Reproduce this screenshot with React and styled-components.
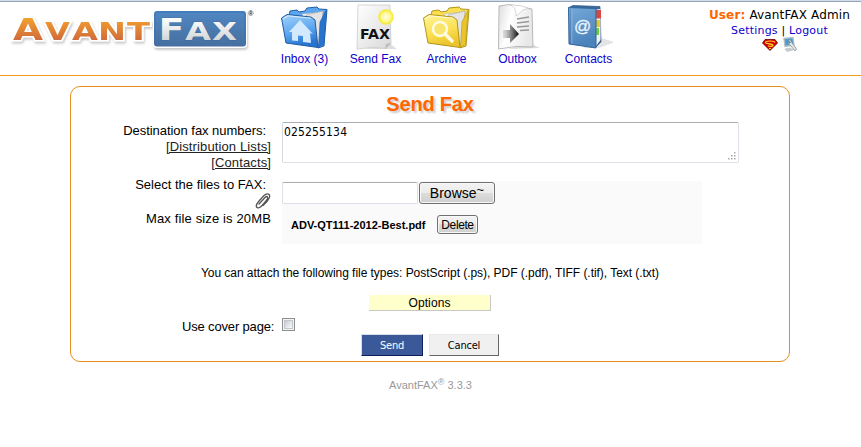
import React from 'react'
import styled, { createGlobalStyle } from 'styled-components'

const GlobalStyle = createGlobalStyle`
  * {
    box-sizing: border-box;
  }
  body {
    margin: 0;
    background: #fff;
    color: #000;
    font-family: 'Liberation Sans', Arial, sans-serif;
    font-size: 13px;
  }
  svg {
    display: block;
  }
`

const Page = styled.div`
  width: 861px;
  height: 447px;
  overflow: hidden;
`

const Header = styled.header`
  display: grid;
  grid-template-columns: 269px 355px 1fr;
  height: 76px;
  background: linear-gradient(#cfdcec 1px, #98a5b5 1px, #98a5b5 2px, #fff 2px);
  border-bottom: 1px solid #f29a1f;
  padding-top: 2px;
`

const Menu = styled.nav`
  display: grid;
  grid-template-columns: repeat(5, 71px);
`

const MenuItem = styled.a`
  display: flex;
  flex-direction: column;
  align-items: center;
  color: #0d00cc;
  font-size: 12px;
  line-height: 14px;
  white-space: nowrap;
  svg {
    margin-bottom: 1px;
  }
`

const User = styled.div`
  display: flex;
  flex-direction: column;
  align-items: center;
  padding: 6px 0 0 74px;
  font-family: 'DejaVu Sans', Verdana, sans-serif;
  font-size: 12px;
  line-height: 15px;
  white-space: nowrap;
  p {
    margin: 0;
    letter-spacing: 0.15px;
  }
  p + p {
    font-size: 11px;
    letter-spacing: 0.2px;
  }
  b {
    color: #ff6600;
  }
  a {
    color: #0d00cc;
  }
`

const UserIcons = styled.div`
  display: flex;
  align-items: center;
  gap: 5px;
  height: 13px;
`

const Panel = styled.main`
  width: 720px;
  height: 276px;
  margin: 10px 0 0 70px;
  border: 1px solid #e3901c;
  border-radius: 10px;
`

const Title = styled.h1`
  margin: 6px 0 6px;
  color: #ff6600;
  font-size: 20px;
  line-height: 23px;
  text-align: center;
  letter-spacing: -0.2px;
  text-shadow: 2px 2px 2px #ccc;
`

const FormRow = styled.div`
  display: grid;
  grid-template-columns: 200px 1fr;
  column-gap: 11px;
  height: ${({ $height }) => $height};
`

const Label = styled.div`
  margin-top: ${({ $top }) => $top || 0};
  line-height: 16px;
  text-align: right;
  white-space: nowrap;
`

const LabelLine = styled.div`
  padding-right: ${({ $inset }) => ($inset ? '5px' : 0)};
  letter-spacing: ${({ $spacing }) => $spacing || 0};
`

const ListLink = styled.a`
  display: block;
  color: #222;
  text-decoration: underline;
  letter-spacing: 0.12px;
`

const Clip = styled.div`
  display: flex;
  justify-content: flex-end;
  height: 18px;
`

const Numbers = styled.div`
  display: flex;
  justify-content: space-between;
  width: 457px;
  height: 41px;
  padding: 2px 2px 1px 1px;
  border: 1px solid #dbdfe6;
  border-top-color: #abadb3;
  border-left-color: #d5d8de;
  border-radius: 2px;
  font-family: 'DejaVu Sans Condensed', 'DejaVu Sans', Tahoma, sans-serif;
  font-stretch: condensed;
  font-size: 12px;
  line-height: 14px;
  letter-spacing: 0.15px;
  svg {
    align-self: flex-end;
  }
`

const Files = styled.div`
  width: 420px;
  height: 63px;
  background: #fafafa;
`

const FilePicker = styled.div`
  display: flex;
  gap: 1px;
  padding-top: 1px;
`

const PathField = styled.div`
  width: 136px;
  height: 22px;
  border: 1px solid #dbdfe6;
  border-top-color: #abadb3;
  border-radius: 2px;
  background: #fff;
`

const NativeButton = styled.button`
  width: ${({ $width }) => $width};
  height: ${({ $height }) => $height};
  padding: 0;
  border: 1px solid #707070;
  border-radius: 3px;
  background: linear-gradient(#f3f3f3, #ebebeb 50%, #dddddd 50%, #cfcfcf);
  box-shadow: inset 0 0 0 1px #f8f8f8;
  color: #000;
  font-family: inherit;
  font-size: ${({ $size }) => $size};
  letter-spacing: ${({ $spacing }) => $spacing || 0};
  line-height: 1;
  white-space: nowrap;
  sup {
    font-size: 13px;
    line-height: 0;
    vertical-align: 4px;
  }
`

const Attached = styled.div`
  display: flex;
  align-items: center;
  gap: 10px;
  padding: 11px 0 0 9px;
  b {
    width: 136px;
    font-size: 11px;
    white-space: nowrap;
  }
`

const Note = styled.p`
  margin: 21px 0 14px;
  font-size: 12px;
  line-height: 16px;
  text-align: center;
  white-space: nowrap;
  letter-spacing: -0.04px;
`

const Options = styled.div`
  width: 122px;
  height: 16px;
  margin: 0 auto;
  border: solid #c8c8c8;
  border-width: 0 1px 1px 0;
  background: #ffffcc;
  font-size: 12px;
  line-height: 16px;
  text-align: center;
  letter-spacing: 0.1px;
`

const CoverRow = styled.div`
  display: flex;
  gap: 8px;
  height: 23px;
  padding: 7px 0 0 111px;
  line-height: 17px;
  white-space: nowrap;
  span:first-child {
    width: 92px;
    letter-spacing: -0.16px;
  }
`

const Checkbox = styled.span`
  width: 13px;
  height: 13px;
  border: 1px solid #8e8f8f;
  background: linear-gradient(135deg, #b8bec8, #f6f6f6 75%);
  box-shadow: inset 0 0 0 1px #f4f4f4, inset 0 0 0 2px #c3c6cc;
`

const Actions = styled.div`
  display: flex;
  gap: 6px;
  padding-left: 290px;
`

const ActionButton = styled.button`
  width: ${({ $width }) => $width};
  height: 22px;
  padding: 1px 0 0;
  border: 1px solid;
  border-color: ${({ $primary }) =>
    $primary ? '#d9dfea #0e1f5b #0e1f5b #d9dfea' : '#e7e7e7 #666 #666 #e7e7e7'};
  background: ${({ $primary }) => ($primary ? '#3b5998' : '#f0f0f0')};
  color: ${({ $primary }) => ($primary ? '#fff' : '#000')};
  font-family: 'DejaVu Sans Condensed', 'DejaVu Sans', Tahoma, sans-serif;
  font-stretch: condensed;
  font-size: 11px;
  letter-spacing: -0.2px;
`

const Footer = styled.footer`
  margin-top: 15px;
  color: #999;
  font-size: 11px;
  line-height: 16px;
  text-align: center;
  sup {
    font-size: 9px;
    line-height: 0;
    vertical-align: 4px;
  }
`

const LogoWord = styled.g`
  font-family: 'DejaVu Sans', Verdana, sans-serif;
  font-weight: bold;
  font-size: 25px;
  paint-order: stroke;
`

const LogoCap = styled.text`
  font-size: 31px;
`

const Logo = () => (
  <svg width="269" height="58" viewBox="0 2 269 58">
    <defs>
      <linearGradient id="orange" gradientUnits="userSpaceOnUse" x1="0" y1="18" x2="0" y2="40">
        <stop offset="0" stopColor="#f3a12c" />
        <stop offset="1" stopColor="#d06b3d" />
      </linearGradient>
      <linearGradient id="logoBlue" x1="0" y1="0" x2="0" y2="1">
        <stop offset="0" stopColor="#5087c3" />
        <stop offset="1" stopColor="#466f9f" />
      </linearGradient>
      <linearGradient id="silver" gradientUnits="userSpaceOnUse" x1="0" y1="18" x2="0" y2="40">
        <stop offset="0" stopColor="#fff" />
        <stop offset="1" stopColor="#d4d6d9" />
      </linearGradient>
      <filter id="soft" x="-10%" y="-20%" width="125%" height="160%">
        <feDropShadow dx="1" dy="2" stdDeviation="1.2" floodColor="#777" floodOpacity="0.4" />
      </filter>
    </defs>
    <LogoWord filter="url(#soft)" fill="url(#orange)" stroke="#fff" strokeWidth="3">
      <LogoCap x="13" y="40" textLength="30" lengthAdjust="spacingAndGlyphs">A</LogoCap>
      <text x="45" y="40" textLength="25" lengthAdjust="spacingAndGlyphs">V</text>
      <text x="72" y="40" textLength="26" lengthAdjust="spacingAndGlyphs">A</text>
      <text x="98" y="40" textLength="28" lengthAdjust="spacingAndGlyphs">N</text>
      <text x="127" y="40" textLength="23" lengthAdjust="spacingAndGlyphs">T</text>
    </LogoWord>
    <rect x="153" y="10" width="94" height="38" rx="4" fill="#fff" filter="url(#soft)" />
    <rect x="154" y="11" width="92" height="35.5" rx="3" fill="url(#logoBlue)" />
    <path d="M155 44V14q0-2 2-2h86q2 0 2 2v30" fill="none" stroke="#3972b4" strokeWidth="0.8" />
    <LogoWord fill="url(#silver)" stroke="#365f91" strokeWidth="0.6">
      <LogoCap x="158.5" y="40" textLength="26" lengthAdjust="spacingAndGlyphs">F</LogoCap>
      <text x="185" y="40" textLength="26" lengthAdjust="spacingAndGlyphs">A</text>
      <text x="212" y="40" textLength="25" lengthAdjust="spacingAndGlyphs">X</text>
    </LogoWord>
    <text x="248" y="16" fontSize="7.5" fontWeight="bold" fill="#333" fontFamily="Liberation Sans">®</text>
  </svg>
)

const Folder = ({ id, light, mid, dark, edge, children }) => (
  <svg width="48" height="49" viewBox="1 2 48 49">
    <defs>
      <linearGradient id={id} x1="0" y1="0" x2="0.3" y2="1">
        <stop offset="0" stopColor={light} />
        <stop offset="0.6" stopColor={mid} />
        <stop offset="1" stopColor={dark} />
      </linearGradient>
    </defs>
    <path d="M9 15 10 11 17 10 19 12 25 11 27 8 37 7 39 9 47 9.500 44 46 38 48Z" fill={mid} stroke={edge} />
    <path d="M22 14 42 12 38 43 33 45Z" fill="#f7f7f7" stroke="#aaa" strokeWidth="0.5" />
    <path d="M26 15 43 11 40 44 35 44Z" fill="#e4e4e4" stroke="#999" strokeWidth="0.5" />
    <path d="M40 22 46 10.500 43.500 44.500 38.500 47Z" fill={dark} stroke={edge} strokeWidth="0.6" />
    <path d="M1.500 18 7 14.500 31 17 35 20 38 47.500 6 43Z" fill={`url(#${id})`} stroke={edge} />
    <path d="M3 19 8 15.800 31 18.200" fill="none" stroke="#fff" strokeOpacity="0.7" />
    {children}
  </svg>
)

const InboxIcon = () => (
  <Folder id="folderBlue" light="#a5d2fb" mid="#5aa6f0" dark="#2774cf" edge="#1f5ca6">
    <path d="M9 32 20 20 33 34 30 33 31 43 23 42V36L18 35.500V41L12 40.500 12 32Z" fill="#d3e9fd" />
  </Folder>
)

const ArchiveIcon = () => (
  <Folder id="folderYellow" light="#fff59a" mid="#fbe052" dark="#ebc42c" edge="#b39518">
    <circle cx="18" cy="29" r="7" fill="#f9e46c" stroke="#fffbe0" strokeWidth="2.600" />
    <path d="m23 34 7 7" stroke="#fffbe0" strokeWidth="3.600" strokeLinecap="round" />
  </Folder>
)

const SendIcon = () => (
  <svg width="48" height="49" viewBox="0 2 48 49">
    <defs>
      <linearGradient id="paper" x1="0" y1="0" x2="1" y2="1">
        <stop offset="0" stopColor="#fff" />
        <stop offset="1" stopColor="#d9d9d9" />
      </linearGradient>
      <radialGradient id="sun">
        <stop offset="0" stopColor="#fffef0" />
        <stop offset="0.55" stopColor="#fff88a" />
        <stop offset="0.8" stopColor="#f6ea38" />
        <stop offset="1" stopColor="#f6ea38" stopOpacity="0" />
      </radialGradient>
    </defs>
    <path d="M12 49 37 43 45 49Z" fill="#c8c8c8" opacity="0.6" />
    <path d="M6 5H38L39 44 34 48.500Q20 46 5 49Z" fill="url(#paper)" stroke="#ccc" strokeWidth="0.8" />
    <path d="M33 49 34 44 39 43Z" fill="#bbb" />
    <circle cx="34" cy="17" r="8.500" fill="url(#sun)" />
    <text
      x="8"
      y="39"
      fontFamily="DejaVu Sans"
      fontWeight="bold"
      fontSize="13.5"
      textLength="30"
      lengthAdjust="spacingAndGlyphs"
      fill="#111"
    >
      FAX
    </text>
  </svg>
)

const OutboxIcon = () => (
  <svg width="48" height="49" viewBox="0 2 48 49">
    <defs>
      <linearGradient id="sheet" x1="0" y1="0" x2="1" y2="0.3">
        <stop offset="0" stopColor="#dcdcdc" />
        <stop offset="0.4" stopColor="#fff" />
        <stop offset="1" stopColor="#e8e8e8" />
      </linearGradient>
      <linearGradient id="arrow">
        <stop offset="0" stopColor="#777" stopOpacity="0.2" />
        <stop offset="0.9" stopColor="#222" />
      </linearGradient>
    </defs>
    <path d="M14 49 35 43 46 48Z" fill="#ccc" opacity="0.7" />
    <path d="M5 6 15 4.500 33 8 38 9 39 47Q22 45 4.500 49Z" fill="url(#sheet)" stroke="#aaa" strokeWidth="0.8" />
    <path d="M15 4.500Q23 7 22 16L26 13Q29 8 36 9L28 6Z" fill="#fff" stroke="#c0c0c0" strokeWidth="0.6" />
    <path d="m23 19 12-2M23 23l12-1.500M23 27l12-1M26 30.500l9-.5" stroke="#999" strokeWidth="1.300" />
    <path d="M9 30h7v-6l9 10-9 9v-5H9Z" fill="url(#arrow)" />
  </svg>
)

const ContactsIcon = () => (
  <svg width="48" height="49" viewBox="0 2 48 49">
    <defs>
      <linearGradient id="book" x1="0" y1="0" x2="0.3" y2="1">
        <stop offset="0" stopColor="#75a9d8" />
        <stop offset="1" stopColor="#4a82bb" />
      </linearGradient>
    </defs>
    <path d="M18 48 36 38 50 42 34 48Z" fill="#bbb" opacity="0.4" />
    <path d="M4 7.500 8 5.500 35 6.500 36 42 30 48Z" fill="#39699e" stroke="#2c5684" strokeWidth="0.7" />
    <path d="M31 9.500 35.500 9V40L31 46Z" fill="#f1f1f1" />
    <path d="M31 10h5v8.500h-5Z" fill="#d94840" />
    <path d="M31 20h3.800v7H31Z" fill="#e3c528" />
    <path d="M31 28h3v7h-3Z" fill="#72cc3b" />
    <path d="M3.500 7.500 31 8.500V48L4 44Z" fill="url(#book)" stroke="#31659b" />
    <path d="M6 9V43.500" stroke="#365f8c" strokeOpacity="0.6" />
    <path d="M6.800 9V43.500" stroke="#a8cbe9" strokeOpacity="0.7" />
    <text x="9" y="32" fontFamily="Liberation Sans" fontSize="17" fill="#eaf4fd" stroke="#eaf4fd" strokeWidth="0.3">
      @
    </text>
  </svg>
)

const ShieldIcon = () => (
  <svg width="16" height="12" viewBox="0 0 16 12">
    <path d="M3 .5H13L15.500 4 8 11.500.5 4Z" fill="#d90000" stroke="#650000" strokeWidth="0.8" />
    <path d="M13 3.500C12 1.500 4 1.500 3.500 3.500c0 1.600 7.500 1 7.500 2.700 0 1.500-3.500 1.300-5 .5" fill="none" stroke="#ffdb24" strokeWidth="1.200" />
    <path d="m7 9 1 1 1-1" stroke="#ffdb24" fill="none" />
  </svg>
)

const ToolIcon = () => (
  <svg width="14" height="15" viewBox="0 0 14 15">
    <path d="M1 1.500 10 .5 11 8 2 9.500Z" fill="#4b9cd3" stroke="#b2bdc5" strokeWidth="1.300" />
    <path d="m2 12 5-1 3 2-6 1.500Z" fill="#c8cdd0" stroke="#a8adb0" strokeWidth="0.5" />
    <path d="M5 3Q8 2 8.500 5L13.500 12 12 14 7 8Q4.500 8 4.500 6l2 .5 1-1Z" fill="#dfe6ea" stroke="#74828a" strokeWidth="0.7" />
  </svg>
)

const PaperclipIcon = () => (
  <svg width="16" height="16" viewBox="0 0 16 16" fill="none" stroke="#555" strokeWidth="1.300" strokeLinecap="round">
    <path d="M4 11 10 4.500Q12 2.500 12.700 4.500 13 6 7.500 12 3.500 16.500 1.500 14 .5 12 4 8L9 2.500Q12.500-.5 14.500 2 15.500 4.200 11.500 9L8 12.500" />
  </svg>
)

const Grip = () => (
  <svg width="9" height="9" viewBox="0 0 9 9" fill="#aaa">
    <path d="M7 0h1.500v1.500H7zM4 3h1.500v1.500H4zM7 3h1.500v1.500H7zM1 6h1.500v1.500H1zM4 6h1.500v1.500H4zM7 6h1.500v1.500H7z" />
  </svg>
)

const menu = [
  { label: 'Inbox (3)', Icon: InboxIcon },
  { label: 'Send Fax', Icon: SendIcon },
  { label: 'Archive', Icon: ArchiveIcon },
  { label: 'Outbox', Icon: OutboxIcon },
  { label: 'Contacts', Icon: ContactsIcon },
]

const App = () => (
  <Page>
    <GlobalStyle />
    <Header>
      <Logo />
      <Menu>
        {menu.map(({ label, Icon }) => (
          <MenuItem key={label}>
            <Icon />
            {label}
          </MenuItem>
        ))}
      </Menu>
      <User>
        <p>
          <b>User:</b> AvantFAX Admin
        </p>
        <p>
          <a>Settings</a> | <a>Logout</a>
        </p>
        <UserIcons>
          <ShieldIcon />
          <ToolIcon />
        </UserIcons>
      </User>
    </Header>
    <Panel>
      <Title>Send Fax</Title>
      <FormRow $height="59px">
        <Label $top="1px">
          <LabelLine $inset $spacing="-0.04px">
            Destination fax numbers:
          </LabelLine>
          <ListLink>[Distribution Lists]</ListLink>
          <ListLink>[Contacts]</ListLink>
        </Label>
        <Numbers>
          025255134
          <Grip />
        </Numbers>
      </FormRow>
      <FormRow $height="63px">
        <Label $top="-4px">
          <LabelLine $inset>Select the files to FAX:</LabelLine>
          <Clip>
            <PaperclipIcon />
          </Clip>
          <LabelLine $spacing="0.14px">Max file size is 20MB</LabelLine>
        </Label>
        <Files>
          <FilePicker>
            <PathField />
            <NativeButton $width="76px" $height="22px" $size="14px">
              Browse<sup>~</sup>
            </NativeButton>
          </FilePicker>
          <Attached>
            <b>ADV-QT111-2012-Best.pdf</b>
            <NativeButton $width="41px" $height="19px" $size="12px" $spacing="-0.4px">
              Delete
            </NativeButton>
          </Attached>
        </Files>
      </FormRow>
      <Note>
        You can attach the following file types: PostScript (.ps), PDF (.pdf), TIFF (.tif), Text (.txt)
      </Note>
      <Options>Options</Options>
      <CoverRow>
        <span>Use cover page:</span>
        <Checkbox />
      </CoverRow>
      <Actions>
        <ActionButton $primary $width="62px">
          Send
        </ActionButton>
        <ActionButton $width="70px">Cancel</ActionButton>
      </Actions>
    </Panel>
    <Footer>
      AvantFAX<sup>®</sup> 3.3.3
    </Footer>
  </Page>
)

export default App
